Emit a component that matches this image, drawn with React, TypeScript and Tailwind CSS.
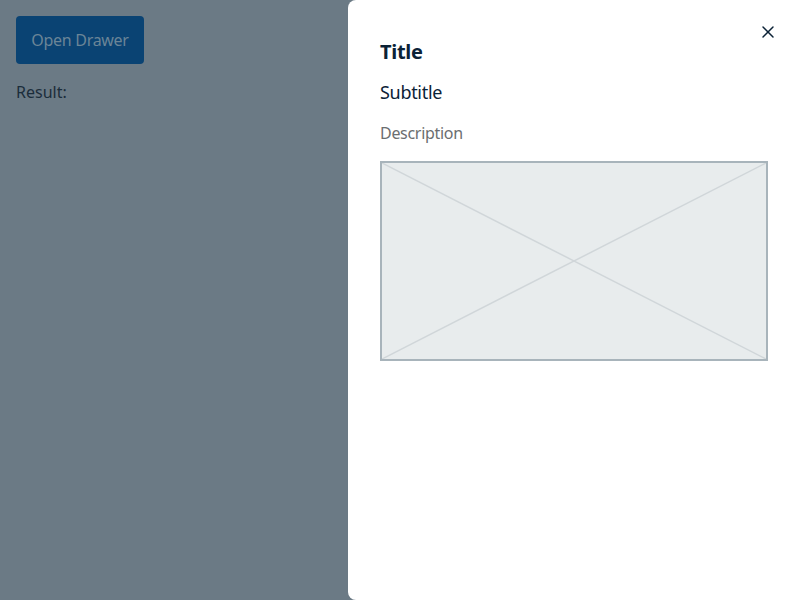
import { X } from "lucide-react";

export default function App() {
  return (
    <div className="relative h-[600px] w-[800px] overflow-hidden bg-[#6b7a85] font-['Noto_Sans',sans-serif]">
      <div className="flex flex-col items-start gap-4 p-4">
        <button className="h-12 w-32 rounded bg-[#0a4373] text-base tracking-[-0.3px] text-[#6b8597]">
          Open Drawer
        </button>
        <p className="text-base text-[#1b2d3b]">Result:</p>
      </div>

      <aside className="absolute inset-y-0 right-0 flex w-[452px] flex-col rounded-l-lg bg-white px-8 pt-[38px]">
        <button className="absolute right-[22px] top-[22px] text-[#0b2236]">
          <X className="h-5 w-5" strokeWidth={1.75} />
        </button>
        <h2 className="text-xl font-bold leading-7 tracking-[-0.3px] text-[#0b2236]">Title</h2>
        <h3 className="mt-3 text-lg leading-7 tracking-[-0.3px] text-[#0b2236]">Subtitle</h3>
        <p className="mt-[15px] text-base leading-6 tracking-[-0.3px] text-[#6b6e70]">Description</p>
        <div className="mt-4 h-[200px] w-[388px] border-2 border-[#a8b4bb] bg-[#e8eced]">
          <svg className="h-full w-full" viewBox="0 0 384 196" preserveAspectRatio="none">
            <line x1="0" y1="0" x2="384" y2="196" stroke="#d0d6d9" strokeWidth="1.5" />
            <line x1="384" y1="0" x2="0" y2="196" stroke="#d0d6d9" strokeWidth="1.5" />
          </svg>
        </div>
      </aside>
    </div>
  );
}
